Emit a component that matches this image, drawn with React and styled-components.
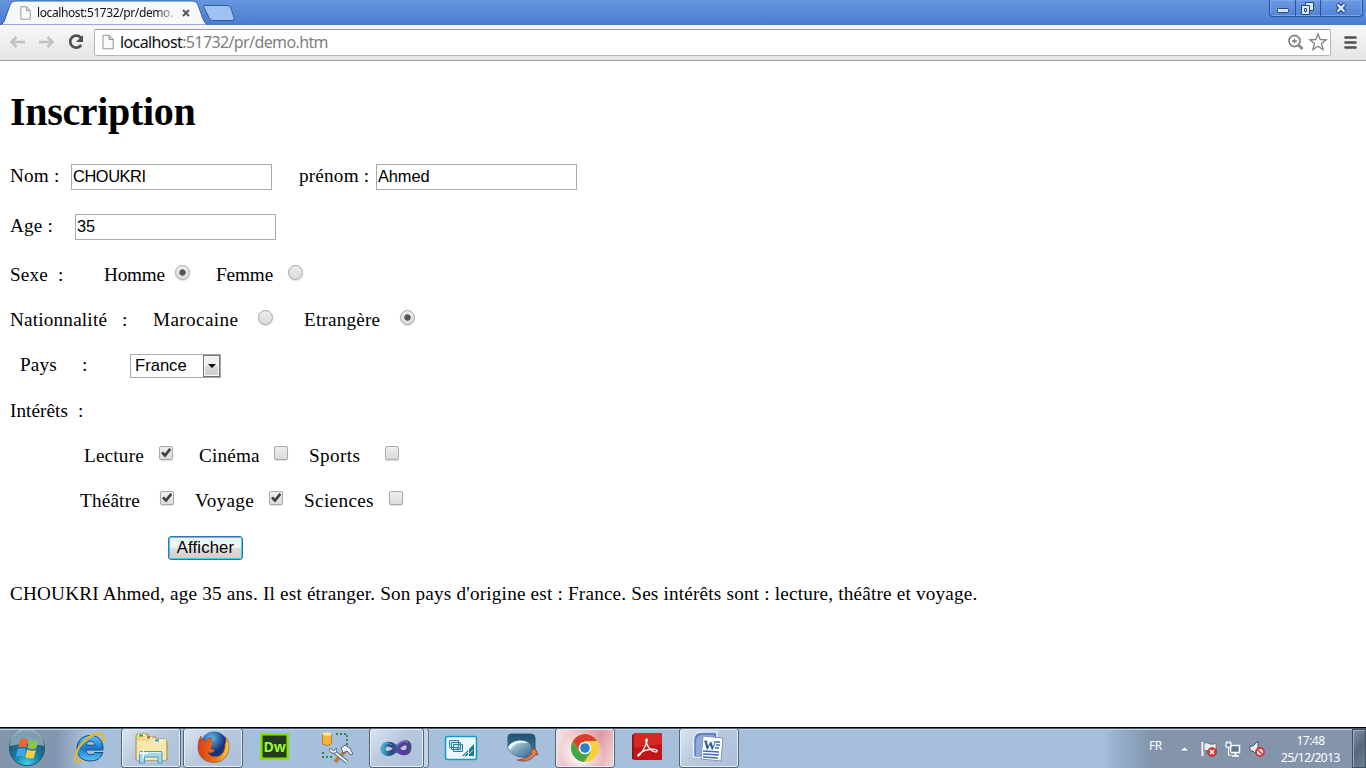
import React from "react";
import styled, { createGlobalStyle } from "styled-components";

const Global = createGlobalStyle`
  * { box-sizing: border-box; }
  body { margin: 0; background: #fff; overflow: hidden; }
  svg { display: block; flex: none; }
`;

const Screen = styled.div`
  width: 1366px;
  height: 768px;
  display: flex;
  flex-direction: column;
  overflow: hidden;
`;

/* Browser chrome */
const TabStrip = styled.header`
  height: 25px;
  display: flex;
  align-items: flex-start;
  background: linear-gradient(#6696df, #4b7bd0);
  flex: none;
`;

const Tab = styled.div`
  width: 208px;
  height: 25px;
  display: grid;
  > * { grid-area: 1 / 1; }
`;

const TabContent = styled.div`
  display: flex;
  align-items: center;
  padding: 1px 0 0 20px;
  gap: 5px;
  z-index: 1;
  font: 12px/16px "Noto Sans", "Open Sans", sans-serif;
`;

const TabTitle = styled.span`
  width: 136px;
  margin-left: 1px;
  overflow: hidden;
  white-space: nowrap;
  letter-spacing: -0.4px;
  color: transparent;
  background: linear-gradient(90deg, #101010 88%, #aaa 98%);
  background-clip: text;
`;

const CloseIcon = styled.svg`
  margin-left: -4px;
`;

const NewTab = styled.svg`
  margin-left: -6px;
`;

const WindowButtons = styled.div`
  margin-left: auto;
  margin-right: 3px;
  height: 17px;
  display: flex;
  border: 1px solid #2c529c;
  border-top: 0;
  border-radius: 0 0 4px 4px;
  background: linear-gradient(#6c9ae1, #5383d6);
  box-shadow: inset 0 0 0 1px #7ba5e7;
`;

const WindowButton = styled.div`
  width: ${(p) => p.$w}px;
  border-left: ${(p) => (p.$first ? 0 : "1px solid #2c529c")};
  display: flex;
  justify-content: center;
`;

const Toolbar = styled.div`
  height: 36px;
  flex: none;
  display: flex;
  align-items: center;
  padding: 0 8px 1px 8px;
  background: linear-gradient(#f7f7f7, #e5e5e5);
  border-bottom: 1px solid #a0a0a0;
`;

const AddressBar = styled.div`
  margin-left: 8px;
  width: 1237px;
  height: 27px;
  display: flex;
  align-items: center;
  padding: 0 2px 0 7px;
  background: #fff;
  border: 1px solid #b5b5b5;
  border-top-color: #9c9c9c;
  border-radius: 2px;
`;

const Url = styled.span`
  flex: 1;
  margin-left: 6px;
  font: 16px/22px "Noto Sans", "Open Sans", sans-serif;
  letter-spacing: -0.61px;
  color: #808080;
  b { font-weight: 400; color: #111; }
`;

const Star = styled.svg`
  margin-left: 3px;
`;

/* Page */
const Page = styled.main`
  height: 666px;
  flex: none;
  padding-left: 10px;
  font: 19.2px "Liberation Serif", "Times New Roman", serif;
  color: #000;
`;

const Title = styled.h1`
  margin: 0;
  height: 90px;
  padding-top: 28px;
  font-size: 40px;
  line-height: 46px;
  letter-spacing: -0.33px;
`;

const Row = styled.div`
  height: ${(p) => p.$h}px;
  display: grid;
  grid-template-columns: ${(p) => p.$cols};
  padding-left: ${(p) => p.$indent || 0}px;
  padding-bottom: ${(p) => p.$lift || 0}px;
  align-items: center;
  white-space: pre;
`;

const Label = styled.span`
  letter-spacing: ${(p) => p.$ls ?? 0.19}px;
`;

const Field = styled.input`
  width: 201px;
  height: 26px;
  margin: 2px 0 0;
  padding: 0 1px 1px;
  border: 1px solid #a9a9b1;
  outline: 0;
  font: 16.4px "Liberation Sans", Arial, sans-serif;
  letter-spacing: ${(p) => p.$ls || 0}px;
  color: #000;
`;

const Radio = styled.span`
  width: 15px;
  height: 15px;
  margin-bottom: 5px;
  border-radius: 50%;
  border: 1px solid #a5a5a5;
  background: ${(p) => (p.$on ? "radial-gradient(circle, #555 0 2.8px, transparent 3.6px)," : "")} linear-gradient(#ededed, #dcdcdc);
  box-shadow: 0 1px 1px #ddd;
`;

const CheckFrame = styled.span`
  width: 14px;
  height: 14px;
  margin-bottom: 6px;
  border: 1px solid #aaa;
  border-radius: 2px;
  background: linear-gradient(#eee, #dcdcdc);
  box-shadow: 0 1px 1px #ddd;
`;

const Select = styled.div`
  width: 91px;
  height: 24px;
  margin-top: 2px;
  display: flex;
  align-items: center;
  justify-content: space-between;
  padding-left: 4px;
  border: 1px solid #a9a9a9;
  font: 16.6px "Liberation Sans", Arial, sans-serif;
`;

const Drop = styled.span`
  width: 17px;
  height: 22px;
  display: flex;
  align-items: center;
  justify-content: center;
  border: 1px solid #6f6f6f;
  box-shadow: inset 0 0 0 1px #fafafa;
  background: linear-gradient(#f0f0f0 48%, #dadada 50%, #cdcdcd);
`;

const Button = styled.button`
  width: 75px;
  height: 24px;
  padding: 0 0 1px;
  border: 1px solid #2e78a8;
  border-radius: 3px;
  box-shadow: inset 0 0 0 1px #46c8ee;
  background: linear-gradient(#f2f2f2 48%, #dedede 50%, #cecece);
  font: 16.6px "Liberation Sans", Arial, sans-serif;
  letter-spacing: 0.2px;
  color: #000;
`;

/* Taskbar */
const Taskbar = styled.footer`
  height: 41px;
  flex: none;
  display: flex;
  border-top: 1px solid #000;
  background: linear-gradient(#46586e 1px, #c6d7ea 1px 2px, transparent 2px),
    linear-gradient(90deg, #8296ae 0 56px, #a6bfdb 84px 1103px, #9bb4d2 1112px, #8394ab 1152px);
`;

const TaskSlot = styled.div`
  width: ${(p) => p.$w || 62}px;
  height: 40px;
  display: flex;
`;

const TaskButton = styled.div`
  width: ${(p) => p.$w || 60}px;
  height: 40px;
  overflow: hidden;
  border: 1px solid #53657b;
  border-radius: 3px;
  box-shadow: inset 0 0 0 1px #e5eef7;
  background: ${(p) =>
    p.$hot
      ? "radial-gradient(circle at 45% 65%, #fff 15%, transparent 55%), linear-gradient(110deg, #f6e6e8, #df9ba2 65%, #f5d8db)"
      : "linear-gradient(135deg, #dce5f0, #b8c9de 45%, #acc0d9)"};
  svg { margin: -1px; }
`;

const StackEdge = styled.div`
  width: 5px;
  height: 40px;
  border: 1px solid #667990;
  border-left: 0;
  border-radius: 0 3px 3px 0;
  background: #c4d3e5;
`;

const Tray = styled.div`
  margin-left: auto;
  display: flex;
  align-items: center;
  color: #fff;
  font: 12px/17px "Noto Sans", "Open Sans", sans-serif;
  letter-spacing: -0.5px;
`;

const Language = styled.span`
  width: 27px;
  padding-bottom: 6px;
`;

const Clock = styled.div`
  width: 76px;
  padding: 1px 7px 0 0;
  text-align: center;
`;

const ShowDesktop = styled.div`
  width: 14px;
  height: 39px;
  margin-top: 1px;
  border: 1px solid #3f4f62;
  box-shadow: inset 1px 1px 0 #9aacc0;
  background: linear-gradient(130deg, #8293a7, #56677b 50%, #6d7f94);
`;

const PageIcon = ({ w, h }) => (
  <svg width={w} height={h} viewBox="0 0 12 15">
    <path d="M1 .7h6.2l4 4v9.6H1z" fill="#fafafa" stroke="#929292" />
    <path d="M7 1v4h4" fill="#ddd" stroke="#929292" />
  </svg>
);

const Arrow = ({ flip }) => (
  <svg width="29" height="18" viewBox="0 0 29 18">
    <path
      d="M8.500 4 3.500 9 8.500 14M4 9h13"
      transform={flip ? "translate(19 0) scale(-1 1)" : undefined}
      fill="none"
      stroke="#c2c2c2"
      strokeWidth="2.6"
    />
  </svg>
);

const Check = ({ on }) => (
  <CheckFrame>
    {on && (
      <svg width="12" height="12" viewBox="0 0 12 12">
        <path d="M1 6.200 3 4.400 4.900 6.400 9.300 1 11.300 2.700 5.100 10.500z" fill="#404040" />
      </svg>
    )}
  </CheckFrame>
);

const Icon = ({ children, w = 62 }) => (
  <svg width={w} height="40" viewBox={`0 0 ${w} 40`}>{children}</svg>
);

const StartOrb = () => (
  <Icon w={59}>
    <defs>
      <radialGradient id="orb" cx=".5" cy=".95" r=".85">
        <stop offset="0" stopColor="#38d5ec" />
        <stop offset=".45" stopColor="#147ba5" />
        <stop offset="1" stopColor="#28506f" />
      </radialGradient>
    </defs>
    <circle cx="27" cy="20.2" r="17.5" fill="url(#orb)" stroke="#304d63" />
    <path d="M10 18a17 17 0 0 1 34 0Q27 13 10 18z" fill="#c9dce5" opacity=".55" />
    <path d="M20 11.500q4-2 8 0l-1.700 8q-4-1.500-8.100 0z" fill="#ee6733" />
    <path d="M29.300 12q4 2 9 .3l-2.100 8.200q-4 1.700-8.600-.6z" fill="#8fc442" />
    <path d="M17.700 21q4-1.600 8.200.2l-1.800 7.400q-4-1.800-8.200.1z" fill="#42a5e8" />
    <path d="M27.100 21.500q4 2 8.800.5l-2.100 7.700q-4 1.500-8.500-.6z" fill="#fecb3c" />
  </Icon>
);

const ExplorerE = () => (
  <Icon>
    <defs>
      <linearGradient id="ie" x2="0" y2="1">
        <stop stopColor="#5ec3f4" /><stop offset=".5" stopColor="#1679ce" /><stop offset="1" stopColor="#55c6f5" />
      </linearGradient>
    </defs>
    <path d="M31.5 7.5C22 7.5 18 14 18 20.5S22 33 31.5 33c7 0 11-3.5 12.3-8.5h-8c-.8 1.5-2 2.2-4 2.2-3 0-4.8-1.8-4.9-4.7H44c.6-8.8-4-14.5-12.5-14.5zm-4.4 9.7c.4-2.7 2-4 4.4-4s4.1 1.3 4.4 4z" fill="url(#ie)" stroke="#164a80" />
    <path d="M23 32C12 40 15 20 29 10c10-7 19-5 15 4" fill="none" stroke="#e9b72b" strokeWidth="2.3" />
  </Icon>
);

const Folder = () => (
  <Icon>
    <path d="M15 32V8l1-2h11l1 3h7l1 2h8l2 3v18z" fill="#efd88a" stroke="#a68c49" />
    <path d="M16 13h13l1-2h15v21H16z" fill="#f7e8a9" />
    <path d="M17 7h7M24 10h7M33 13h9" stroke="#fff8d5" strokeWidth="2" />
    <path d="M18 7.5h4" stroke="#28a436" strokeWidth="2" />
    <path d="M26 9.5h3" stroke="#da4329" strokeWidth="2" />
    <path d="M34 12.5h4" stroke="#388fdb" strokeWidth="2" />
    <path d="M18.5 35V24.5q0-1 1-1H40q1 0 1 1V35h-4v-6H23.500v6z" fill="#a0d9ef" stroke="#5296b8" />
    <path d="M19 24.500h21" stroke="#d9f4fd" />
    <path d="M18 25.500h9M22.500 21v9" stroke="#fff" />
  </Icon>
);

const Firefox = () => (
  <Icon>
    <defs>
      <radialGradient id="globe" cx=".4" cy=".25"><stop stopColor="#63bce9" /><stop offset="1" stopColor="#14347d" /></radialGradient>
      <linearGradient id="fox" x2="1"><stop stopColor="#d83b19" /><stop offset=".55" stopColor="#ee7219" /><stop offset="1" stopColor="#ffca3a" /></linearGradient>
    </defs>
    <circle cx="31" cy="17" r="13.500" fill="url(#globe)" />
    <path d="M18 8q-3 4-3 11C15 29 22 34.500 31 34.500c9 0 15-7 15-16 0-5-2-8-4-10 2 5 0 6 0 9 0 6-4 12-11 11-3 0-5-2-6-4 3 1 5 0 7-2-4-1-5-3-3-5l2-2c-3-1-4-3-2-6-3 0-5 2-6 4-3-2-5-1-5-5z" fill="url(#fox)" stroke="#9d4223" strokeWidth=".6" />
  </Icon>
);

const Dreamweaver = () => (
  <Icon>
    <rect x="15" y="5" width="29" height="27" fill="#82e600" />
    <rect x="17.5" y="7.5" width="24" height="22" fill="#263a22" />
    <text x="18.5" y="24" fontFamily="Noto Sans, sans-serif" fontWeight="700" fontSize="15" textLength="22.5" lengthAdjust="spacingAndGlyphs" fill="#9bf52c">Dw</text>
  </Icon>
);

const Tools = () => (
  <Icon>
    <path d="M29 6h11v11M16 24v5h11" fill="none" stroke="#318a43" strokeWidth="2" strokeDasharray="2 2" />
    <path d="M15.500 6v10q4.500 3 9 0V6z" fill="#efb83d" stroke="#bc821d" />
    <ellipse cx="20" cy="6" rx="4.500" ry="1.800" fill="#ffe38e" />
    <path d="m28 34 12-13" stroke="#b57d34" strokeWidth="3.500" />
    <path d="m26 23 14 11" stroke="#596b80" strokeWidth="4" />
    <path d="m26 23 14 11" stroke="#eef2f4" strokeWidth="2" />
    <path d="m23.500 20 3 3 3-3c1 4-1 6-4 5s-4-3-2-5zM34 20l4-3 5 3 3 6-2 1-4-4-4 2z" fill="#e7edf1" stroke="#51616f" />
  </Icon>
);

const VisualStudio = () => (
  <Icon w={55}>
    <defs>
      <linearGradient id="vs" x2="1"><stop stopColor="#43a6cf" /><stop offset=".3" stopColor="#254780" /><stop offset=".55" stopColor="#4a4ba0" /><stop offset=".8" stopColor="#62309a" /><stop offset="1" stopColor="#454787" /></linearGradient>
    </defs>
    <path d="M27 20c-6-6-13-4-13 1s7 7 13 0 13-9 13-2-7 8-13 1z" fill="none" stroke="url(#vs)" strokeWidth="5" />
    <path d="M13 18q4-5 10-1M27 19q8-9 12-4" fill="none" stroke="#8ac9e5" opacity=".55" />
  </Icon>
);

const Designer = () => (
  <Icon>
    <rect x="14.500" y="8.500" width="31" height="23" rx="2" fill="#edf6fb" stroke="#109bc9" strokeWidth="1.500" />
    <path d="M18.500 12.500h9v7h-9zM20.500 14.500h9v7h-9zM22.500 16.500h9v7h-9z" fill="#dcecf4" stroke="#287f9c" />
    <path d="M24.500 20h5M27 18v4.500" stroke="#388da6" />
    <path d="m31 28 6-6v6zM38 28v-7l5-5v12z" fill="#157fac" />
    <path d="m33 28 5-5m-2 5 6-6" stroke="#b8deec" />
  </Icon>
);

const Swoosh = () => (
  <Icon>
    <defs>
      <linearGradient id="sea" x2="0" y2="1"><stop stopColor="#1f5375" /><stop offset="1" stopColor="#487d9e" /></linearGradient>
      <linearGradient id="foam" x2=".8" y2="1"><stop stopColor="#fff" /><stop offset="1" stopColor="#79abc7" stopOpacity=".2" /></linearGradient>
    </defs>
    <path d="M18 6h20q4 0 4 4v17l-6 2c-9 1-18-2-21-9V9q0-3 3-3z" fill="url(#sea)" stroke="#33566f" />
    <path d="M15 20c3-8 17-10 22-4 3 4 0 9-6 12-7 1-14-2-16-8z" fill="url(#foam)" />
    <path d="M15 19c4-7 14-8 20-4-8-1-14 0-18 7z" fill="#f5fbff" />
    <path d="M24 32c8-.5 12-3 15-7l-3-.5 6-4.500 3 7-2.500-.5c-4 6-11 8-18.500 5.500z" fill="#d87c52" stroke="#934e38" />
  </Icon>
);

const Chrome = () => (
  <Icon>
    <circle cx="30" cy="20" r="14" fill="#f7cf3d" />
    <path d="M17.900 13a14 14 0 0 1 24.200 0H30l-6 10z" fill="#dc3c32" />
    <path d="M17.900 13A14 14 0 0 0 29 34l7-10.500H24z" fill="#44a647" />
    <circle cx="30" cy="20" r="6.300" fill="#f7f7f7" />
    <circle cx="30" cy="20" r="4.800" fill="#2e80c5" />
  </Icon>
);

const Acrobat = () => (
  <Icon>
    <path d="m15 7 3-2v27l-3-1z" fill="#8e1516" />
    <path d="M17 5h28v27H17z" fill="#c31418" />
    <path d="M17 5h28v11L17 20z" fill="#e0382f" opacity=".55" />
    <path d="M29.500 11c-1.500 1 .5 7 3.500 10s8 4 7 1.500-11-1.500-16 2c-4 2.500-4 5-1 2 4-4 9-16 6.500-15.500z" fill="none" stroke="#fff" strokeWidth="1.300" />
  </Icon>
);

const Word = () => (
  <Icon>
    <path d="M14.500 29V12q0-8 8-8H38v26z" fill="#5f84be" stroke="#e8f0f8" strokeWidth="1.500" />
    <path d="M17 29V14q0-7 7-7h11v22z" fill="#8eacd6" />
    <path d="m24 8 20 2-2 23-20-2z" fill="#fff" stroke="#8195b2" />
    <text x="24" y="21" transform="rotate(4 24 21)" fontFamily="Liberation Serif, serif" fontWeight="700" fontSize="13" fill="#2054a1">W</text>
    <path d="M37 14h4m-4 3h4m-5 3h4m-16 3 16 1m-16 2 16 1m-16 2 15 1" stroke="#426caf" strokeWidth="1.500" />
  </Icon>
);

const TrayIcons = () => (
  <svg width="100" height="40" viewBox="1175 728 100 40">
    <path d="m1179 751 4.500-4 4.500 4z" fill="#fff" stroke="#4d6074" strokeWidth=".5" />
    <path d="M1201.500 742v14" stroke="#fff" strokeWidth="2" />
    <path d="M1203 743q3-1 6 1 3 1 6-1v8q-3 2-6 0-3-1-6 0z" fill="#eef1f4" stroke="#4a5869" strokeWidth=".7" />
    <circle cx="1211" cy="752" r="4.500" fill="#d93932" stroke="#8c2928" strokeWidth=".6" />
    <path d="m1209 750 4 4m0-4-4 4" stroke="#fff" strokeWidth="1.500" />
    <path d="M1229.500 745.500h9v7h-9zM1231 756h7m-3.500-3v3" fill="#62758a" stroke="#fff" strokeWidth="1.500" />
    <path d="M1225 743h5v4h-5zm2.500 4v8h3M1226 741v2m3-2v2" fill="#738398" stroke="#fff" strokeWidth="1.200" />
    <path d="M1249 746h3l5-5v15l-5-5h-3z" fill="#eaf0f5" stroke="#48596c" />
    <circle cx="1259" cy="752" r="4" fill="#fff" stroke="#d53932" strokeWidth="2" />
    <path d="m1256 749 6 6" stroke="#d53932" strokeWidth="1.700" />
  </svg>
);

export default function App() {
  return (
    <Screen>
      <Global />
      <TabStrip>
        <Tab>
          <svg width="208" height="25" viewBox="0 0 208 25">
            <path d="M0 25c3-1 4-3 5-6l5-14q1-4 5-4h178q4 0 5 4l5 14q2 5 5 6z" fill="#f7f8fa" stroke="#345fa9" />
          </svg>
          <TabContent>
            <PageIcon w={11} h={14} />
            <TabTitle>localhost:51732/pr/demo.</TabTitle>
            <CloseIcon width="18" height="10" viewBox="0 0 18 10"><path d="m9 2 6 6m0-6L9 8" stroke="#555" strokeWidth="1.900" /></CloseIcon>
          </TabContent>
        </Tab>
        <NewTab width="34" height="25" viewBox="202 0 34 25">
          <path d="M205 5.500h22q3 0 4 3l3 9q1 3-2 3h-19q-3 0-4-3l-5-10q-1-2 1-2z" fill="#9fc2f2" stroke="#315ca6" />
        </NewTab>
        <WindowButtons>
          <WindowButton $w={25} $first>
            <svg width="24" height="16"><rect x="6.500" y="8.500" width="11" height="4" rx="1" fill="#d9e5f7" stroke="#284778" /></svg>
          </WindowButton>
          <WindowButton $w={25}>
            <svg width="24" height="16"><path d="M9.500 2.500h8v8h-8z" fill="#dce7f8" stroke="#284778" /><path d="M5.500 5.500h8v9h-8zM8.500 8.500h2v3h-2z" fill="#dce7f8" stroke="#284778" /></svg>
          </WindowButton>
          <WindowButton $w={42}>
            <svg width="40" height="16"><path d="m15 4 8 8m0-8-8 8" stroke="#284778" strokeWidth="4.500" /><path d="m15.500 4.500 7 7m0-7-7 7" stroke="#e4edf9" strokeWidth="2.300" /></svg>
          </WindowButton>
        </WindowButtons>
      </TabStrip>
      <Toolbar>
        <Arrow />
        <Arrow flip />
        <svg width="20" height="20" viewBox="0 0 20 20">
          <path d="M15 6A6 6 0 1 0 15.200 13" fill="none" stroke="#505050" strokeWidth="2.700" />
          <path d="M17 3v7h-7z" fill="#505050" />
        </svg>
        <AddressBar>
          <PageIcon w={12} h={16} />
          <Url><b>localhost</b>:51732/pr/demo.htm</Url>
          <svg width="18" height="18" viewBox="0 0 18 18"><circle cx="7.500" cy="8" r="5.500" fill="none" stroke="#878787" strokeWidth="1.800" /><path d="M5 8h5M7.500 5.500v5" stroke="#777" strokeWidth="1.300" /><path d="m11.500 12 4 4" stroke="#878787" strokeWidth="2.800" /></svg>
          <Star width="20" height="20" viewBox="0 0 20 20"><path d="m10 2 2.200 5.500 6 .3-4.700 3.800 1.600 6L10 14.200l-5.100 3.400 1.600-6L1.800 7.800l6-.3z" fill="#fff" stroke="#818181" strokeWidth="1.300" /></Star>
        </AddressBar>
        <svg width="26" height="18" viewBox="0 0 26 18"><path d="M14.500 4.500h10M14.500 9.500h10M14.500 14.500h10" stroke="#505050" strokeWidth="2.600" strokeLinecap="round" /></svg>
      </Toolbar>

      <Page>
        <Title>Inscription</Title>
        <Row $h={50} $cols="61px 228px 77px 201px">
          <Label>Nom :</Label><Field $ls={-0.42} defaultValue="CHOUKRI" /><Label>prénom :</Label><Field $ls={-0.1} defaultValue="Ahmed" />
        </Row>
        <Row $h={50} $cols="65px 201px"><Label>Age :</Label><Field defaultValue="35" /></Row>
        <Row $h={48} $cols="48px 46px 71px 41px 72px 15px">
          <Label>Sexe</Label><Label>:</Label><Label $ls={-0.2}>Homme</Label><Radio $on /><Label $ls={-0.1}>Femme</Label><Radio />
        </Row>
        <Row $h={43} $lift={2} $cols="112px 31px 105px 46px 96px 15px">
          <Label>Nationnalité</Label><Label>:</Label><Label $ls={0.38}>Marocaine</Label><Radio /><Label>Etrangère</Label><Radio $on />
        </Row>
        <Row $h={46} $indent={10} $cols="62px 48px 91px">
          <Label>Pays</Label><Label>:</Label>
          <Select>France<Drop><svg width="8" height="4"><path d="M0 0h8L4 4z" /></svg></Drop></Select>
        </Row>
        <Row $h={46} $cols="68px 20px"><Label $ls={0.05}>Intérêts</Label><Label>:</Label></Row>
        <Row $h={45} $lift={2} $indent={74} $cols="75px 40px 75px 35px 76px 14px">
          <Label>Lecture</Label><Check on /><Label>Cinéma</Label><Check /><Label $ls={0.4}>Sports</Label><Check />
        </Row>
        <Row $h={44} $indent={70} $cols="80px 35px 74px 35px 85px 14px">
          <Label>Théâtre</Label><Check on /><Label $ls={0.3}>Voyage</Label><Check on /><Label $ls={0.35}>Sciences</Label><Check />
        </Row>
        <Row $h={50} $indent={158} $cols="75px"><Button>Afficher</Button></Row>
        <Row $h={42} $cols="1fr">
          <Label>CHOUKRI Ahmed, age 35 ans. Il est étranger. Son pays d'origine est : France. Ses intérêts sont : lecture, théâtre et voyage.</Label>
        </Row>
      </Page>

      <Taskbar>
        <TaskSlot $w={59}><StartOrb /></TaskSlot>
        <TaskSlot><ExplorerE /></TaskSlot>
        <TaskSlot><TaskButton><Folder /></TaskButton></TaskSlot>
        <TaskSlot><TaskButton><Firefox /></TaskButton></TaskSlot>
        <TaskSlot><Dreamweaver /></TaskSlot>
        <TaskSlot><Tools /></TaskSlot>
        <TaskSlot><TaskButton $w={55}><VisualStudio /></TaskButton><StackEdge /></TaskSlot>
        <TaskSlot><Designer /></TaskSlot>
        <TaskSlot><Swoosh /></TaskSlot>
        <TaskSlot><TaskButton $hot><Chrome /></TaskButton></TaskSlot>
        <TaskSlot><Acrobat /></TaskSlot>
        <TaskSlot><TaskButton><Word /></TaskButton></TaskSlot>
        <Tray>
          <Language>FR</Language>
          <TrayIcons />
          <Clock>17:48<br />25/12/2013</Clock>
          <ShowDesktop />
        </Tray>
      </Taskbar>
    </Screen>
  );
}
